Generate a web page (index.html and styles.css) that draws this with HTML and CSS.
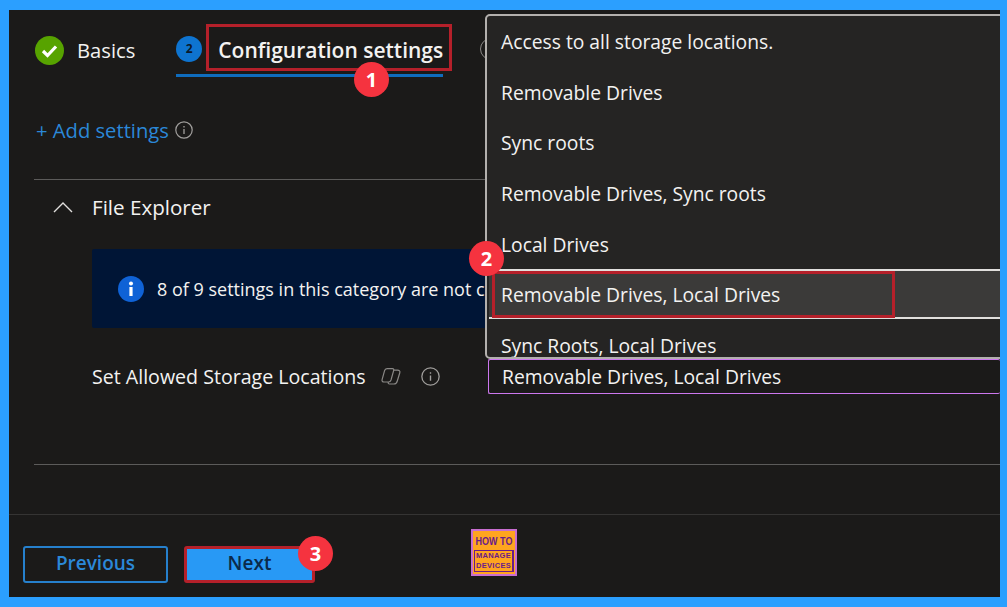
FILE: index.html
```html
<!DOCTYPE html>
<html lang="en">
<head>
    <meta charset="UTF-8">
    <meta name="viewport" content="width=device-width, initial-scale=1.0">
    <title>Configuration settings</title>
    <link rel="stylesheet" href="styles.css">
</head>
<body>
    <div class="panel">
        <div class="stepper">
            <div class="step step-done">
                <svg class="step-icon" width="29" height="29" viewBox="0 0 29 29">
                    <circle cx="14.5" cy="14.5" r="14.5" fill="#57a300"/>
                    <path d="M8 15l4.500 4.500L21 10.500" fill="none" stroke="#fff" stroke-width="3.200"/>
                </svg>
                <span>Basics</span>
            </div>
            <div class="step step-active">
                <span class="step-num">2</span>
                <span class="step-label">Configuration settings</span>
            </div>
            <span class="step-next"></span>
        </div>

        <div class="add-settings">
            <span class="add-link">+ Add settings</span>
            <svg class="info" width="18" height="18" viewBox="0 0 18 18">
                <circle cx="9" cy="9" r="8.200" fill="none" stroke="#a19f9d" stroke-width="1.200"/>
                <path d="M9 8v5M9 5v1.400" stroke="#a19f9d" stroke-width="1.300"/>
            </svg>
        </div>

        <div class="section">
            <div class="section-head">
                <svg width="20" height="12" viewBox="0 0 20 12">
                    <path d="M1 11l9-9 9 9" fill="none" stroke="#e1dfdd" stroke-width="1.400"/>
                </svg>
                <span>File Explorer</span>
            </div>
            <div class="banner">
                <svg width="26" height="26" viewBox="0 0 26 26">
                    <circle cx="13" cy="13" r="13" fill="#0f62d6"/>
                    <path d="M13 11v9" stroke="#fff" stroke-width="3.200"/>
                    <circle cx="13" cy="7.400" r="2" fill="#fff"/>
                </svg>
                <span>8 of 9 settings in this category are not c</span>
            </div>
            <div class="setting-row">
                <span class="setting-name">Set Allowed Storage Locations</span>
                <svg class="copilot" width="20" height="17" viewBox="0 0 20 17">
                    <path d="M6 .7h5.500c1 0 1.500.7 1.200 1.700L10 12c-.4 1.300-1.300 2-2.500 2H3c-1.500 0-2.300-1-1.900-2.400L3.500 2.800C3.900 1.500 4.800.7 6 .7z" fill="none" stroke="#8a8886" stroke-width="1.200"/>
                    <path d="M12.600 2.200h3.900c1.800 0 2.800 1 2.300 2.600L16.300 13c-.5 1.800-1.600 3-3.300 3H8.500c-1 0-1.500-.8-1.300-2" fill="none" stroke="#8a8886" stroke-width="1.200"/>
                </svg>
                <svg class="info-row" width="19" height="19" viewBox="0 0 18 18">
                    <circle cx="9" cy="9" r="8.200" fill="none" stroke="#a19f9d" stroke-width="1.200"/>
                    <path d="M9 8v5M9 5v1.400" stroke="#a19f9d" stroke-width="1.300"/>
                </svg>
                <div class="select-box">Removable Drives, Local Drives</div>
            </div>
        </div>

        <div class="footer">
            <button class="btn-prev">Previous</button>
            <button class="btn-next">Next</button>
            <div class="logo">
                <div class="logo-top">HOW TO</div>
                <div class="logo-bottom">MANAGE<br>DEVICES</div>
            </div>
        </div>

        <ul class="dropdown">
            <li>Access to all storage locations.</li>
            <li>Removable Drives</li>
            <li>Sync roots</li>
            <li>Removable Drives, Sync roots</li>
            <li>Local Drives</li>
            <li class="hovered">Removable Drives, Local Drives</li>
            <li>Sync Roots, Local Drives</li>
        </ul>

        <div class="mark mark-config"></div>
        <div class="mark mark-row"></div>
        <span class="badge badge-1">1</span>
        <span class="badge badge-2">2</span>
        <span class="badge badge-3">3</span>
    </div>
</body>
</html>
```

FILE: styles.css
```css
* {
    box-sizing: border-box;
}
html, body {
    height: 100%;
}
body {
    margin: 0;
    padding: 10px 7px 10px 9px;
    background-color: #2b9fff;
    font-family: "Open Sans", Arial, sans-serif;
    overflow: hidden;
}
.panel {
    position: relative;
    display: flex;
    flex-direction: column;
    height: 587px;
    background-color: #1b1a19;
    color: #f3f2f1;
    font-size: 19.600px;
    overflow: hidden;
}
.stepper {
    display: flex;
    align-items: flex-start;
    height: 67px;
    padding: 25px 0 0 26px;
}
.step {
    display: flex;
    align-items: center;
    height: 30px;
}
.step-done span {
    margin-left: 13px;
    font-size: 20.200px;
}
.step-active {
    position: relative;
    margin-left: 41px;
    width: 267px;
    height: 42px;
    align-items: flex-start;
    border-bottom: 3px solid #0f6cbd;
}
.step-num {
    width: 26px;
    height: 26px;
    margin-top: 1px;
    border-radius: 50%;
    background-color: #0e74d0;
    color: #0b1a2b;
    font-size: 12px;
    font-weight: 700;
    line-height: 26px;
    text-align: center;
}
.step-label {
    margin: 1px 0 0 16px;
    font-size: 21px;
    font-weight: 600;
    white-space: nowrap;
}
.step-next {
    width: 22px;
    height: 22px;
    margin: 3px 0 0 37px;
    border: 1px solid #8a8886;
    border-radius: 50%;
}
.add-settings {
    display: flex;
    align-items: center;
    gap: 6px;
    height: 30px;
    margin-top: 38px;
    padding-left: 27px;
}
.add-link {
    color: #2b88d8;
    font-size: 20.200px;
}
.section {
    margin: 34px 0 0 25px;
    height: 286px;
    border-top: 1px solid #5c5b5a;
    border-bottom: 1px solid #5c5b5a;
}
.section-head {
    display: flex;
    align-items: center;
    gap: 19px;
    height: 54px;
    padding-left: 19px;
}
.section-head span {
    font-size: 20.600px;
}
.banner {
    display: flex;
    align-items: center;
    gap: 13px;
    height: 79px;
    margin: 15px 0 0 58px;
    padding-left: 26px;
    background-color: #001536;
    border-radius: 2px;
    font-size: 18px;
    white-space: nowrap;
    overflow: hidden;
}
.setting-row {
    display: flex;
    align-items: center;
    height: 33px;
    margin: 32px 0 0 58px;
}
.setting-name {
    width: 289px;
    white-space: nowrap;
}
.info-row {
    margin-left: 20px;
}
.select-box {
    width: 512px;
    height: 35px;
    margin-left: 48px;
    padding: 0 13px;
    border: 1px solid #cc77ee;
    border-right: 0;
    border-radius: 2px;
    font-size: 19.300px;
    line-height: 33px;
    white-space: nowrap;
}
.footer {
    display: flex;
    align-items: flex-start;
    flex: 1;
    margin-top: 49px;
    padding: 31px 0 0 14px;
    border-top: 1px solid #353433;
}
.footer button {
    height: 37px;
    padding: 0 0 3px;
    border-radius: 3px;
    font-family: inherit;
    font-size: 19px;
    font-weight: 600;
}
.btn-prev {
    width: 145px;
    background: none;
    border: 2px solid #2680cc;
    color: #2b88d8;
}
.btn-next {
    width: 131px;
    margin-left: 16px;
    background-color: #2899f5;
    border: 3px solid #b5202a;
    color: #0b2a4a;
}
.logo {
    width: 46px;
    height: 47px;
    margin: -17px 0 0 156px;
    padding: 4px 1px 0;
    background-color: #ffa51f;
    border: 2px solid #c86dd0;
    color: #6a1b8a;
    font-family: "Liberation Sans", Arial, sans-serif;
    font-weight: 700;
    text-align: center;
}
.logo-top {
    font-size: 9px;
    line-height: 12px;
    transform: scaleY(1.300);
}
.logo-bottom {
    margin-top: 3px;
    border: 1px solid #6a1b8a;
    border-right-width: 2px;
    font-size: 7.500px;
    line-height: 10px;
    letter-spacing: 0.300px;
}
.dropdown {
    position: absolute;
    left: 476px;
    top: 4px;
    right: -6px;
    height: 345px;
    margin: 0;
    padding: 3px 0 0;
    list-style: none;
    background-color: #252423;
    border: 2px solid #b3b0ad;
    border-radius: 5px;
    font-size: 19.300px;
    overflow: hidden;
}
.dropdown li {
    height: 50.700px;
    padding-left: 14px;
    line-height: 46px;
    white-space: nowrap;
}
.dropdown .hovered {
    height: 50.500px;
    margin: -3.500px 0 3.700px 2px;
    padding-left: 12px;
    background-color: #3b3a39;
    border-top: 2px solid #e1dfdd;
    border-bottom: 2px solid #e1dfdd;
    line-height: 48px;
}
.mark {
    position: absolute;
    border: 3px solid #b5202a;
    pointer-events: none;
}
.mark-config {
    left: 197px;
    top: 14px;
    width: 246px;
    height: 47px;
}
.mark-row {
    left: 483px;
    top: 261px;
    width: 403px;
    height: 47px;
}
.badge {
    position: absolute;
    width: 35px;
    height: 35px;
    border-radius: 50%;
    background-color: #f5333f;
    color: #fff;
    font-size: 20px;
    font-weight: 700;
    line-height: 35px;
    text-align: center;
}
.badge-1 {
    left: 345px;
    top: 52px;
}
.badge-2 {
    left: 460px;
    top: 231px;
}
.badge-3 {
    left: 289px;
    top: 526px;
}
```
